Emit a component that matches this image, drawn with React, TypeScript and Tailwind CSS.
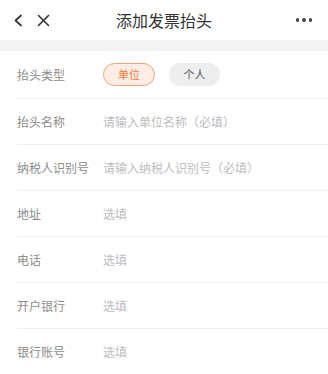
import { useState } from "react";

const fields = [
  { label: "抬头名称", placeholder: "请输入单位名称（必填）" },
  { label: "纳税人识别号", placeholder: "请输入纳税人识别号（必填）" },
  { label: "地址", placeholder: "选填" },
  { label: "电话", placeholder: "选填" },
  { label: "开户银行", placeholder: "选填" },
  { label: "银行账号", placeholder: "选填" },
];

const App = () => {
  const [type, setType] = useState<"company" | "person">("company");

  return (
    <div
      className="w-[328px] h-[374px] overflow-hidden bg-white"
      style={{ fontFamily: '"Noto Sans CJK SC", "Noto Sans", sans-serif' }}
    >
      {/* header */}
      <div className="h-10 flex items-center px-[13px]">
        <div className="flex items-center gap-[14px] w-[80px]">
          <svg width="10" height="13" viewBox="0 0 10 13" fill="none">
            <path d="M8 1.5L2.5 6.5L8 11.5" stroke="#333" strokeWidth="1.7" strokeLinecap="round" strokeLinejoin="round" />
          </svg>
          <svg width="13" height="13" viewBox="0 0 13 13" fill="none">
            <path d="M1.5 1.5L11.5 11.5M11.5 1.5L1.5 11.5" stroke="#333" strokeWidth="1.6" strokeLinecap="round" />
          </svg>
        </div>
        <h1 className="flex-1 text-center text-[16px] text-[#333] leading-none">添加发票抬头</h1>
        <div className="w-[80px] flex justify-end pr-[3px] gap-[3px]">
          <span className="w-[3.5px] h-[3.5px] rounded-full bg-[#444]" />
          <span className="w-[3.5px] h-[3.5px] rounded-full bg-[#444]" />
          <span className="w-[3.5px] h-[3.5px] rounded-full bg-[#444]" />
        </div>
      </div>

      <div className="h-[11px] bg-[#f3f3f3]" />

      <div className="pl-[17px]">
        <div className="h-[48px] flex items-center border-b border-[#f0f0f0]">
          <span className="w-[86px] text-[12px] text-[#8c8c8c]">抬头类型</span>
          <div className="flex gap-[14px]">
            <button
              onClick={() => setType("company")}
              className={
                type === "company"
                  ? "w-[52px] h-[23px] rounded-full border-[1.5px] border-[#f3a17a] bg-[#fdede4] text-[11px] text-[#f07a3c]"
                  : "w-[52px] h-[23px] rounded-full bg-[#eeeeee] text-[11px] text-[#555]"
              }
            >
              单位
            </button>
            <button
              onClick={() => setType("person")}
              className={
                type === "person"
                  ? "w-[51px] h-[23px] rounded-full border-[1.5px] border-[#f3a17a] bg-[#fdede4] text-[11px] text-[#f07a3c]"
                  : "w-[51px] h-[23px] rounded-full bg-[#eeeeee] text-[11px] text-[#555]"
              }
            >
              个人
            </button>
          </div>
        </div>

        {fields.map((f) => (
          <div key={f.label} className="h-[46px] flex items-center border-b border-[#f0f0f0]">
            <span className="w-[86px] text-[12px] text-[#8c8c8c]">{f.label}</span>
            <input
              className="flex-1 bg-transparent outline-none text-[12px] text-[#333] placeholder:text-[#bcbcbc]"
              placeholder={f.placeholder}
            />
          </div>
        ))}
      </div>
    </div>
  );
};

export default App;
